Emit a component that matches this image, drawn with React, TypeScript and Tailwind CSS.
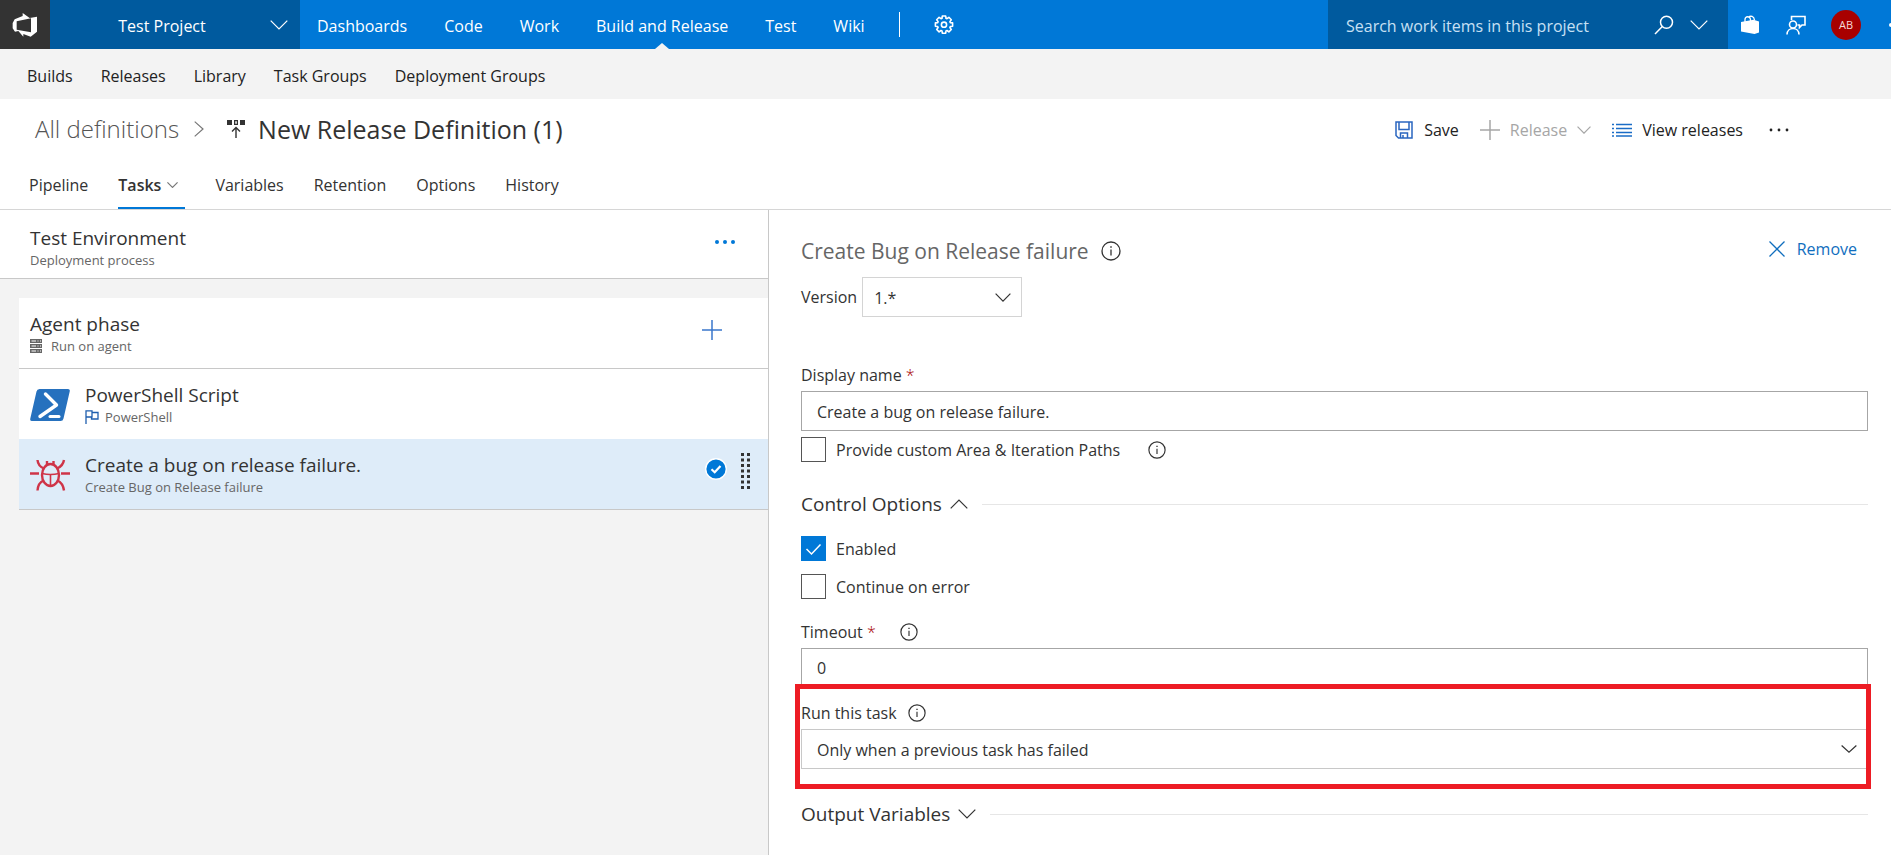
import { useState } from 'react';
import type { ReactNode } from 'react';

const mainLinks = ['Dashboards', 'Code', 'Work', 'Build and Release', 'Test', 'Wiki'];
const subLinks = ['Builds', 'Releases', 'Library', 'Task Groups', 'Deployment Groups'];
const tabs = ['Pipeline', 'Tasks', 'Variables', 'Retention', 'Options', 'History'];

// ---------- Icons ----------

function Chevron({ className }: { className: string }) {
  return (
    <svg viewBox="0 0 18 10" className={className} fill="none" stroke="currentColor" preserveAspectRatio="none">
      <path d="M0.7 0.7 9 9 17.3 0.7" vectorEffect="non-scaling-stroke" strokeWidth="1.2" />
    </svg>
  );
}

function Info({ className }: { className: string }) {
  return (
    <svg viewBox="0 0 20 20" className={className} fill="none" stroke="currentColor">
      <circle cx="10" cy="10" r="9" strokeWidth="1.3" />
      <path d="M10 8.5V14.5" strokeWidth="1.3" />
      <path d="M10 5.2V6.8" strokeWidth="1.5" />
    </svg>
  );
}

function Plus() {
  return (
    <svg viewBox="0 0 20 20" className="size-5" fill="none" stroke="currentColor" strokeWidth="1.5">
      <path d="M10 0V20M0 10H20" />
    </svg>
  );
}

function Logo() {
  return (
    <svg viewBox="38 36 78 76" className="size-[26px]" fill="white" fillRule="evenodd">
      <path d="M40 68 46 57 70 47V38L91 53 113 49V94L94 109 72 101V109L57 92 47 94 40 84ZM52 63V88L95 96V54Z" />
    </svg>
  );
}

function Gear() {
  return (
    <svg viewBox="0 0 20 20" className="size-5" fill="none" stroke="currentColor" strokeWidth="1.6" strokeLinejoin="round">
      <path d="M8.3 1h3.4l.3 2.3 1 .4 1.9-1.4 2.4 2.4-1.4 1.9.4 1 2.3.3v3.4l-2.3.3-.4 1 1.4 1.9-2.4 2.4-1.9-1.4-1 .4-.3 2.3H8.3L8 15.9l-1-.4-1.9 1.4-2.4-2.4 1.4-1.9-.4-1-2.3-.3V7.9l2.3-.3.4-1-1.4-1.9 2.4-2.4L7 3.7l1-.4z" />
      <circle cx="10" cy="9.7" r="2.6" />
    </svg>
  );
}

function Search() {
  return (
    <svg viewBox="0 0 20 20" className="size-5" fill="none" stroke="currentColor" strokeWidth="1.5">
      <circle cx="12.5" cy="7.2" r="6" />
      <path d="M8.3 11.5 1 19" />
    </svg>
  );
}

function Bag() {
  return (
    <svg viewBox="0 0 20 20" className="size-5" fill="currentColor">
      <path d="M1 7 13.5 4.8 19 6.5V17.5L14.5 19 1 16.5Z" />
      <path d="M5 7V4.5C5 .8 10 .8 10.5 4.5V6M8.5 2.3C10.5.3 14 1.2 14.5 5" fill="none" stroke="currentColor" strokeWidth="1.3" />
    </svg>
  );
}

function Feedback() {
  return (
    <svg viewBox="0 0 20 20" className="size-5" fill="none" stroke="currentColor" strokeWidth="1.6">
      <path d="M5.5 5V1.5H19V10H16L13.5 12.5V10H11.500" />
      <circle cx="7" cy="9.5" r="3.5" />
      <path d="M1 19.5C1 11.5 13 11.5 13 19.5" />
    </svg>
  );
}

function Release() {
  return (
    <svg viewBox="0 0 19 20" className="h-5 w-[19px]" fill="#333">
      <path d="M0 1H5V6H0ZM13 1H18V6H13ZM7 1V6H11V1ZM8.3 2.3H9.8V4.7H8.3Z" fillRule="evenodd" />
      <path d="M9 19V9M5 12.5 9 8.5 13 12.5" fill="none" stroke="#333" strokeWidth="1.4" />
    </svg>
  );
}

function Save() {
  return (
    <svg viewBox="0 0 18 18" className="size-[18px]" fill="none" stroke="#2a66c0" strokeWidth="1.5">
      <path d="M1 1H17V17H3.500L1 14.5ZM4 1V8.5H14V1M5.5 17V12H12.5V17M8 14V17" />
    </svg>
  );
}

function List() {
  return (
    <svg viewBox="0 0 20 14" className="h-[14px] w-5" fill="none" stroke="#1a6cc6" strokeWidth="1.3">
      <path d="M0 1.5H2M4 1.5H20M0 5.5H2M4 5.5H20M0 9.5H2M4 9.5H20M0 13H2M4 13H20" />
    </svg>
  );
}

function Dots({ r }: { r: number }) {
  return (
    <svg viewBox="0 0 22 6" className="h-[6px] w-[22px]" fill="currentColor">
      <circle cx="3" cy="3" r={r} />
      <circle cx="11" cy="3" r={r} />
      <circle cx="19" cy="3" r={r} />
    </svg>
  );
}

function Server() {
  return (
    <svg viewBox="0 0 12 14" className="h-[14px] w-3" fill="#666">
      <path d="M0 0H12V4H0ZM0 5H12V9H0ZM0 10H12V14H0Z" />
      <path d="M1.5 2H6M1.5 7H6M1.5 12H6M7.5 2H8.5M10 2H11M7.5 7H8.5M10 7H11M7.5 12H8.5M10 12H11" stroke="white" />
    </svg>
  );
}

function Flag() {
  return (
    <svg viewBox="0 0 14 14" className="size-[14px]" fill="none" stroke="#1f5fae" strokeWidth="1.3">
      <path d="M1 14V.8H7V7H1M7 2.5H13V9H6.5V7" />
    </svg>
  );
}

function PowerShell() {
  return (
    <svg viewBox="0 0 40 34" className="h-[34px] w-10">
      <path d="M9.5 1H38Q40.3 1 39.7 3.5L33.5 30.5Q33 33 30.5 33H2Q-.3 33 .3 30.5L6.5 3.5Q7 1 9.5 1Z" fill="#2671be" />
      <path d="M15.5 6 26.5 17 10 28.5" fill="none" stroke="white" strokeWidth="3.4" strokeLinecap="round" strokeLinejoin="round" />
      <path d="M20 28.5H29" stroke="white" strokeWidth="3" strokeLinecap="round" />
    </svg>
  );
}

function Bug() {
  return (
    <svg viewBox="0 0 40 34" className="h-[34px] w-10" fill="none" stroke="#cf3448" strokeWidth="2.4">
      <ellipse cx="20.5" cy="17" rx="8.5" ry="11" />
      <path d="M12 15.5Q20.5 17.5 29 15.5M20.5 16.5V28" strokeWidth="1.6" />
      <path d="M17 7V3M23.5 7V3" />
      <path d="M0 15.5H9M31 15.5H40M7.5 2Q8 8 14 10.5M34 2Q33 8 27 10.5M7.5 32.5Q8 25 13.5 22.5M34 32.5Q33 25 27.5 22.5" />
    </svg>
  );
}

function CheckCircle() {
  return (
    <svg viewBox="0 0 22 22" className="size-[22px]">
      <circle cx="11" cy="11" r="10.3" fill="#0078d7" stroke="white" strokeWidth="1.4" />
      <path d="M6.5 11.3 9.7 14.3 15.5 8" fill="none" stroke="white" strokeWidth="2.2" />
    </svg>
  );
}

function DragHandle() {
  return (
    <svg viewBox="0 0 9 36" className="h-9 w-[9px]" stroke="#333" strokeWidth="3">
      <path d="M1.5 0V36M7.5 0V36" strokeDasharray="3 2.5" />
    </svg>
  );
}

// ---------- Form pieces ----------

function CheckBox({ id, label, initial = false, children }: { id: string; label: string; initial?: boolean; children?: ReactNode }) {
  const [checked, setChecked] = useState(initial);

  return (
    <div className="flex h-[25px] items-center">
      <span className="grid size-[25px] shrink-0">
        <input
          id={id}
          type="checkbox"
          checked={checked}
          onChange={() => setChecked(!checked)}
          className="col-start-1 row-start-1 size-[25px] appearance-none border border-[#555] bg-white checked:border-[#0078d7] checked:bg-[#0078d7]"
        />
        {checked && (
          <svg viewBox="0 0 25 25" className="pointer-events-none col-start-1 row-start-1 size-[25px]" fill="none" stroke="white" strokeWidth="1.5">
            <path d="M5.5 13 10.5 18 19.5 8.5" />
          </svg>
        )}
      </span>
      <label htmlFor={id} className="pl-[10px]">{label}</label>
      {children}
    </div>
  );
}

function SectionToggle({ title, open }: { title: string; open: boolean }) {
  return (
    <div className="flex h-7 items-center">
      <button type="button" aria-expanded={open} className="flex items-center gap-2 text-[19px] leading-7">
        {title}
        <Chevron className={open ? 'h-[10px] w-[18px] rotate-180' : 'h-[10px] w-[18px]'} />
      </button>
      <div className="ml-[14px] h-px flex-1 bg-[#e6e6e6]" />
    </div>
  );
}

export default function App() {
  const [name, setName] = useState('Create a bug on release failure.');
  const [timeout, setTimeoutValue] = useState('0');

  return (
    <div className="flex min-h-screen flex-col overflow-x-hidden bg-white font-['Open_Sans',sans-serif] text-base leading-6 text-[#333]">
      {/* Top bar */}
      <header className="flex h-[49px] items-center bg-[#0078d7] text-white">
        <a href="#" aria-label="Home" className="flex h-full w-[50px] items-center justify-center bg-[#333]">
          <Logo />
        </a>
        <button type="button" className="flex h-full w-[250px] items-center bg-[#005a9e] pr-3 pl-1">
          <span className="flex-1 pt-[2px]">Test Project</span>
          <Chevron className="h-[10px] w-[18px]" />
        </button>
        <nav className="flex h-full items-center gap-[37px] pl-[17px]">
          {mainLinks.map((link) => (
            <a key={link} href="#" className="relative flex h-full items-center pt-[2px] whitespace-nowrap">
              {link}
              {link === 'Build and Release' && (
                <svg viewBox="0 0 14 6" className="absolute bottom-0 left-1/2 h-[6px] w-[14px] -translate-x-1/2" fill="#f3f3f3">
                  <path d="M0 6 7 0 14 6Z" />
                </svg>
              )}
            </a>
          ))}
        </nav>
        <div className="ml-[34px] h-[25px] w-px bg-white" />
        <button type="button" aria-label="Settings" className="ml-[34px]">
          <Gear />
        </button>
        <div className="ml-auto flex h-full w-[400px] items-center bg-[#005a9e] pr-5 pl-[18px]">
          <input
            type="search"
            aria-label="Search work items"
            placeholder="Search work items in this project"
            className="min-w-0 flex-1 bg-transparent pt-[2px] outline-none placeholder:text-[#c7e0f4]"
          />
          <button type="button" aria-label="Search"><Search /></button>
          <button type="button" aria-label="Search options" className="ml-4">
            <Chevron className="h-[10px] w-[18px]" />
          </button>
        </div>
        <button type="button" aria-label="Marketplace" className="ml-3"><Bag /></button>
        <button type="button" aria-label="Feedback" className="ml-[26px]"><Feedback /></button>
        <button type="button" className="ml-[25px] size-[30px] rounded-full bg-[#a80000] text-[11px] text-[#f3d9d9]">AB</button>
        <div className="ml-7 h-1 w-[2px] rounded-l-full bg-white" />
      </header>

      {/* Hub links */}
      <nav className="flex h-[50px] items-center gap-7 bg-[#f3f3f3] pt-[3px] pl-[27px] text-[#222]">
        {subLinks.map((link) => (
          <a key={link} href="#">{link}</a>
        ))}
      </nav>

      {/* Title and actions */}
      <div className="flex h-[60px] items-center pr-[101px] pl-[35px]">
        <a href="#" className="text-2xl font-light text-[#555]">All definitions</a>
        <Chevron className="ml-3 h-[10px] w-4 -rotate-90 text-[#777]" />
        <span className="ml-5"><Release /></span>
        <h1 className="ml-3 text-[25px] leading-8">New Release Definition (1)</h1>
        <div className="ml-auto flex items-center pt-[2px] text-[#222]">
          <button type="button" className="flex items-center gap-[11px]"><Save />Save</button>
          <button type="button" disabled className="ml-[21px] flex items-center gap-[10px] text-[#a6a6a6]">
            <Plus />Release
            <Chevron className="h-2 w-[14px]" />
          </button>
          <button type="button" className="ml-[21px] flex items-center gap-[10px]"><List />View releases</button>
          <button type="button" aria-label="More actions" className="ml-[25px]"><Dots r={1.4} /></button>
        </div>
      </div>

      <div className="flex h-[51px] gap-[30px] border-b border-[#d6d6d6] pl-[29px]">
        {tabs.map((tab) => (
          <a
            key={tab}
            href="#"
            className={
              tab === 'Tasks'
                ? 'flex items-center gap-[6px] border-y-2 border-t-transparent border-b-[#0078d7] pt-[2px] pr-[7px] font-semibold'
                : 'flex items-center pt-[2px]'
            }
          >
            {tab}
            {tab === 'Tasks' && <Chevron className="h-[6px] w-[11px] text-[#777]" />}
          </a>
        ))}
      </div>

      <main className="grid flex-1 grid-cols-[769fr_1122fr]">
        {/* Task list */}
        <div className="border-r border-[#c8c8c8] bg-[#f3f3f3]">
          <div className="flex h-[69px] justify-between border-b border-[#c8c8c8] bg-white pt-4 pr-8 pl-[30px]">
            <div>
              <h2 className="text-[19px] leading-6">Test Environment</h2>
              <p className="text-[13px] leading-5 text-[#666]">Deployment process</p>
            </div>
            <button type="button" aria-label="More" className="h-8 text-[#0078d7]"><Dots r={2} /></button>
          </div>

          <div className="mt-[19px] ml-[19px]">
            <div className="flex h-[71px] justify-between border-b border-[#c8c8c8] bg-white pt-[14px] pr-[46px] pl-[11px]">
              <div>
                <h3 className="text-[19px] leading-6">Agent phase</h3>
                <p className="flex items-center gap-[9px] text-[13px] leading-5 text-[#666]"><Server />Run on agent</p>
              </div>
              <button type="button" aria-label="Add task" className="h-9 text-[#3a77cc]"><Plus /></button>
            </div>
            <div className="flex h-[70px] gap-[15px] bg-white pt-[14px] pl-[11px]">
              <div className="flex h-11 items-center"><PowerShell /></div>
              <div>
                <h3 className="text-[19px] leading-6">PowerShell Script</h3>
                <p className="flex items-center gap-[6px] text-[13px] leading-5 text-[#666]"><Flag />PowerShell</p>
              </div>
            </div>
            <div className="flex h-[71px] border-b border-[#c8c8c8] bg-[#deecf9] pt-[14px] pr-[18px] pl-[11px]">
              <div className="flex h-11 items-center"><Bug /></div>
              <div className="flex-1 pl-[15px]">
                <h3 className="text-[19px] leading-6">Create a bug on release failure.</h3>
                <p className="text-[13px] leading-5 text-[#666]">Create Bug on Release failure</p>
              </div>
              <div className="flex h-9 items-center gap-[14px]">
                <div className="pb-1"><CheckCircle /></div>
                <DragHandle />
              </div>
            </div>
          </div>
        </div>

        {/* Task settings */}
        <form className="pt-[27px] pr-[23px] pl-8">
          <div className="flex h-7">
            <h2 className="text-[21px] leading-7 text-[#666]">Create Bug on Release failure</h2>
            <Info className="mt-1 ml-3 size-5" />
            <button type="button" className="mr-[11px] ml-auto flex h-6 items-center gap-3 text-[#106ebe]">
              <svg viewBox="0 0 16 16" className="size-4" fill="none" stroke="currentColor" strokeWidth="1.3">
                <path d="M.5.5 15.5 15.5M15.5.5.5 15.5" />
              </svg>
              Remove
            </button>
          </div>

          <div className="mt-3 flex items-center gap-[5px]">
            <label htmlFor="version">Version</label>
            <div className="grid h-10 w-40 items-center">
              <select id="version" className="col-start-1 row-start-1 h-10 w-full appearance-none border border-[#d4d4d4] bg-white pt-[2px] pl-[11px]">
                <option>1.*</option>
              </select>
              <Chevron className="pointer-events-none col-start-1 row-start-1 mr-[11px] h-[9px] w-4 justify-self-end" />
            </div>
          </div>

          <label htmlFor="display-name" className="mt-[46px] block">
            Display name <span className="font-light text-[#a80000]">*</span>
          </label>
          <input
            id="display-name"
            type="text"
            value={name}
            onChange={(e) => setName(e.target.value)}
            className="mt-1 block h-10 w-full border border-[#a6a6a6] px-[15px] pt-[2px]"
          />

          <div className="mt-[6px]">
            <CheckBox id="custom-paths" label="Provide custom Area & Iteration Paths">
              <Info className="ml-7 size-[18px]" />
            </CheckBox>
          </div>

          <div className="mt-7"><SectionToggle title="Control Options" open /></div>

          <div className="mt-[18px] flex flex-col gap-[13px]">
            <CheckBox id="enabled" label="Enabled" initial />
            <CheckBox id="continue" label="Continue on error" />
          </div>

          <div className="mt-[21px] flex items-center">
            <label htmlFor="timeout">Timeout <span className="font-light text-[#a80000]">*</span></label>
            <Info className="ml-6 size-[18px]" />
          </div>
          <input
            id="timeout"
            type="text"
            value={timeout}
            onChange={(e) => setTimeoutValue(e.target.value)}
            className="mt-1 block h-10 w-full border border-[#a6a6a6] px-[15px]"
          />

          {/* Highlighted setting */}
          <div className="relative mt-[13px]">
            <div className="flex items-center">
              <label htmlFor="run-when">Run this task</label>
              <Info className="ml-[11px] size-[18px]" />
            </div>
            <div className="mt-1 grid items-center">
              <select id="run-when" className="col-start-1 row-start-1 h-10 w-full appearance-none border border-[#c8c8c8] bg-white pt-[2px] pl-[15px]">
                <option>Only when a previous task has failed</option>
              </select>
              <Chevron className="pointer-events-none col-start-1 row-start-1 mr-[11px] h-2 w-4 justify-self-end" />
            </div>
            <div className="pointer-events-none absolute -top-[17px] -right-[3px] -bottom-5 -left-[6px] border-5 border-[#ed1c24]" />
          </div>

          <div className="mt-[31px]"><SectionToggle title="Output Variables" open={false} /></div>
        </form>
      </main>
    </div>
  );
}
